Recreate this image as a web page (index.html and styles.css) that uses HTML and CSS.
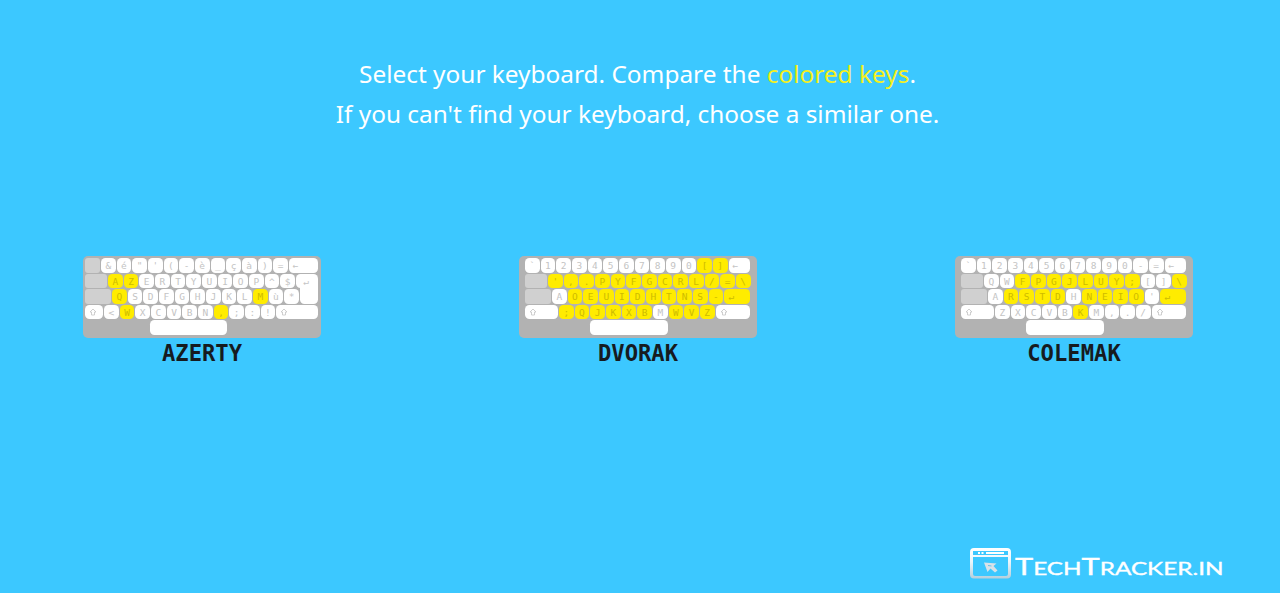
FILE: index.html
```html
<!DOCTYPE html>
<html lang="en">
<head>
<meta charset="utf-8">
<title>Select your keyboard</title>
<link rel="stylesheet" href="styles.css">
</head>
<body>
<main class="page">
  <p class="intro">Select your keyboard. Compare the <span class="accent">colored keys</span>.<br>If you can't find your keyboard, choose a similar one.</p>
  <div class="choices">
    <figure class="choice"><div class="board" data-layout="azerty"></div><figcaption class="name">AZERTY</figcaption></figure>
    <figure class="choice"><div class="board" data-layout="dvorak"></div><figcaption class="name">DVORAK</figcaption></figure>
    <figure class="choice"><div class="board" data-layout="colemak"></div><figcaption class="name">COLEMAK</figcaption></figure>
  </div>
  <footer class="brand">
    <svg class="mark" width="42" height="31" viewBox="0 0 42 31">
      <defs><linearGradient id="g" x1="0" y1="0" x2="0" y2="1"><stop offset="0" stop-color="#fff"/><stop offset=".45" stop-color="#eaf6fc"/><stop offset="1" stop-color="#b5cfdc"/></linearGradient></defs>
      <path fill="url(#g)" fill-rule="evenodd" d="M4 0H37Q41 0 41 4V26.500Q41 30.500 37 30.500H4Q0 30.500 0 26.500V4Q0 0 4 0ZM3 3V7H38V3ZM3 9V26Q3 28 5 28H36Q38 28 38 26V9Z"/>
      <path d="M8 5h2M11.500 5h2M16 5h18" stroke="#fff" stroke-width="1.800"/>
      <path d="M14 14.500L26.500 15.500L23.500 18L27.500 22.500L25 24.500L20.500 20.500L17.500 24Z" fill="#d9e2e8"/>
      <path d="M18 17.500L21.500 18" stroke="#65c4ed" stroke-width="1"/>
    </svg>
    <svg class="wordmark" width="212" height="31" viewBox="0 0 212 31"><text class="wordtext" x="2" y="26.500" textLength="208.500" lengthAdjust="spacingAndGlyphs"><tspan class="cap">T</tspan>ECH<tspan class="cap">T</tspan>RACKER.IN</text></svg>
  </footer>
</main>
<script src="boards.js"></script>
</body>
</html>
```
FILE: styles.css
```css
body { margin: 0; background: #3cc8ff; }
.page { box-sizing: border-box; height: 593px; padding-top: 54px; display: flex; flex-direction: column; overflow: hidden; }
.intro { margin: 0 0 0 -5px; text-align: center; font: 24.400px/40px "Noto Sans", sans-serif; color: #fff; }
.accent { color: #f5f01e; }
.choices { display: flex; justify-content: space-between; margin: 122px 87px 0 83px; }
.choice { margin: 0; width: 238px; }
.board { box-sizing: border-box; height: 82px; padding: 2px 3px 0 2.300px; border-radius: 5px; background: #b2b2b2; display: flex; flex-direction: column; gap: 1px; }
.ansi { padding: 2px 6.900px 0 6px; }
.row { display: flex; gap: 1px; height: 14.600px; }
.key { box-sizing: border-box; flex: none; width: 14.670px; height: 14.600px; border-radius: 4.500px; background: #fff; color: #c4c4c4; font: 9.500px/15px "DejaVu Sans Mono", monospace; text-align: center; }
.key.wide { flex: 1; text-align: left; padding-left: 4px; }
.key.blank { background: #d0d0d0; border-radius: 3px; }
.key.hot { background: #ffec00; color: #cdbb00; }
.key.enter-top { padding-left: 7px; border-bottom-right-radius: 0; }
.key.enter-low { height: 18.600px; margin-top: -4px; border-top-left-radius: 0; border-top-right-radius: 0; }
.arrow { display: block; width: 8px; height: 8px; margin-top: 3.500px; }
.name { margin-top: 2px; text-align: center; font: bold 22.200px/26px "DejaVu Sans Mono", monospace; color: #161b1f; }
.brand { display: flex; align-items: flex-start; margin: auto 55px 14px auto; height: 31px; }
.wordmark { margin-left: 1px; }
.wordtext { font: 17.600px Lato, sans-serif; fill: #fff; stroke: #fff; stroke-width: .35px; }
.cap { font-size: 22.300px; }
```
FILE: boards.js
```js
// Row: [width of left key, its style, letters, highlighted indexes, right key style]
const layouts = {
  azerty: [
    [14.67, "blank", "&é\"'(-è_çà)=", [], "back"],
    [21.8, "blank", "AZERTYUIOP^$", [0, 1], "enter-top"],
    [25.8, "blank", "QSDFGHJKLMù*", [0, 9], "enter-low"],
    [17.8, "shift", "<WXCVBN,;:!", [1, 7], "shift"]
  ],
  dvorak: [
    [0, "", "`1234567890[]", [11, 12], "back"],
    [22, "blank", "',.PYFGCRL/=\\", [0,1,2,3,4,5,6,7,8,9,10,11,12], ""],
    [26, "blank", "AOEUIDHTNS-", [1,2,3,4,5,6,7,8,9,10], "enter-hot"],
    [33, "shift", ";QJKXBMWVZ", [0,1,2,3,4,5,7,8,9], "shift"]
  ],
  colemak: [
    [0, "", "`1234567890-=", [], "back"],
    [22, "blank", "QWFPGJLUY;[]\\", [2,3,4,5,6,7,8,9,12], ""],
    [26, "blank", "ARSTDHNEIO'", [1,2,3,4,6,7,8,9], "enter-hot"],
    [33, "shift", "ZXCVBKM,./", [5], "shift"]
  ]
};
const arrow = '<svg class="arrow" viewBox="0 0 8 8" fill="none" stroke="#c4c4c4" stroke-width=".8"><path d="M4 1L7 4H5.500V7H2.500V4H1Z"/></svg>';
function add(row, cls, text, width) {
  const el = document.createElement("span");
  el.className = "key " + cls;
  if (text === "shift") el.innerHTML = arrow; else el.textContent = text;
  if (width) el.style.width = width + "px";
  row.append(el);
}
for (const board of document.querySelectorAll(".board")) {
  const name = board.dataset.layout;
  if (name !== "azerty") board.classList.add("ansi");
  for (const [width, left, letters, hot, right] of layouts[name]) {
    const row = document.createElement("div");
    row.className = "row";
    if (width) {
      add(row, left === "blank" ? "blank" : "", left === "shift" ? "shift" : "", width);
      if (left === "shift") row.lastChild.style.paddingLeft = "4px";
    }
    [...letters].forEach((c, i) => add(row, hot.includes(i) ? "hot" : "", c));
    if (right === "back") add(row, "wide", "←");
    if (right === "shift") add(row, "wide", "shift");
    if (right === "enter-top") add(row, "wide enter-top", "↵");
    if (right === "enter-low") add(row, "wide enter-low", "");
    if (right === "enter-hot") add(row, "wide hot", "↵");
    board.append(row);
  }
  const last = document.createElement("div");
  last.className = "row";
  add(last, "", "", 77.5);
  last.lastChild.style.marginLeft = (name === "azerty" ? 64.7 : 65) + "px";
  board.append(last);
}
```
